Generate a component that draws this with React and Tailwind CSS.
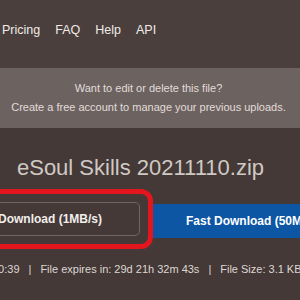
export default function App() {
  return (
    <div
      className="w-[300px] h-[300px] overflow-hidden bg-[#443936] text-[#e6e1de]"
      style={{ fontFamily: '"Liberation Sans", Arial, sans-serif' }}
    >
      {/* Top nav */}
      <div className="h-[68px] bg-[#4a3f3c] flex items-start pt-[23px] pl-[2px] gap-[15px] text-[12.5px] leading-[14px] text-[#efebe9] whitespace-nowrap">
        <span>Pricing</span>
        <span>FAQ</span>
        <span>Help</span>
        <span>API</span>
      </div>

      {/* Account notice */}
      <div className="h-[60px] bg-[#6c6260] flex flex-col items-center pt-[11px] pr-[3px] text-[11px] leading-[19px] text-[#e2dcd9] whitespace-nowrap">
        <p>Want to edit or delete this file?</p>
        <p>Create a free account to manage your previous uploads.</p>
      </div>

      {/* File name */}
      <h1 className="pt-[27px] text-center text-[22px] leading-[26px] font-light text-[#cfc9c5] whitespace-nowrap pr-[19px]">
        eSoul Skills 20211110.zip
      </h1>

      {/* Download buttons */}
      <div className="mt-[8px] flex items-start -ml-[53px] whitespace-nowrap">
        <div className="shrink-0 border-[5px] border-[#e3161e] rounded-[12px] p-[8px]">
          <div className="w-[180px] h-[34px] border border-[#6f6663] rounded-[5px] flex items-center justify-center text-[12px] font-bold text-[#f1eeec]">
            Download (1MB/s)
          </div>
        </div>
        <div className="shrink-0 mt-[15px] h-[34px] bg-[#0c56a4] flex items-center pl-[33px] pr-[40px] text-[12px] font-bold text-white">
          Fast Download (50MB/s)
        </div>
      </div>

      {/* File info */}
      <div className="mt-[13px] -ml-[8px] flex items-center text-[11px] leading-[14px] text-[#ddd7d4] whitespace-nowrap">
        <span>10:39</span>
        <span className="mx-[9px]">|</span>
        <span>File expires in: 29d 21h 32m 43s</span>
        <span className="mx-[9px]">|</span>
        <span>File Size: 3.1 KB</span>
      </div>
    </div>
  )
}
